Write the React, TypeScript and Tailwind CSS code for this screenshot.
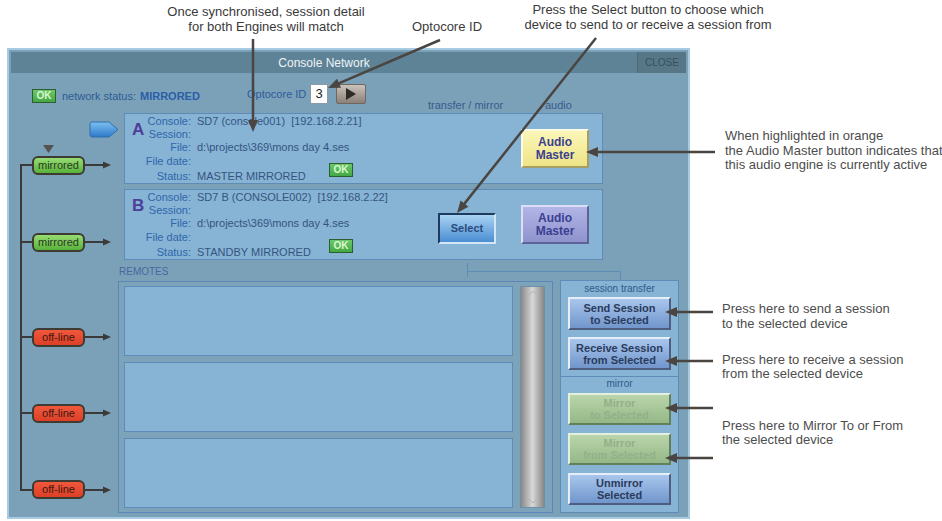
import React from "react";

function Arrow({ x1, y1, x2, y2, len = 12, hw = 5, w = 2.5, color = "#4a4541" }: { x1: number; y1: number; x2: number; y2: number; len?: number; hw?: number; w?: number; color?: string }) {
  const dx = x2 - x1;
  const dy = y2 - y1;
  const L = Math.hypot(dx, dy);
  const ux = dx / L;
  const uy = dy / L;
  const bx = x2 - ux * len;
  const by = y2 - uy * len;
  const px = -uy * hw;
  const py = ux * hw;
  return (
    <g>
      <line x1={x1} y1={y1} x2={bx + ux} y2={by + uy} stroke={color} strokeWidth={w} />
      <polygon points={`${x2},${y2} ${bx + px},${by + py} ${bx - px},${by - py}`} fill={color} />
    </g>
  );
}

function OkBadge() {
  return (
    <div className="w-[24px] h-[14px] border border-[#2e5e2e] bg-gradient-to-b from-[#6cc86a] to-[#43a843] flex items-center justify-center text-[10px] font-bold leading-none text-[#d8f7cf]">
      OK
    </div>
  );
}

function Engine({ letter, consoleText, status, children }: { letter: string; consoleText: string; status: string; children: React.ReactNode }) {
  const label = "text-right text-[#2f66aa]";
  const val = "text-[#34557f] whitespace-pre";
  return (
    <div className="ml-[6px] w-[479px] h-[71px] bg-[#87b3d4] border border-[#5f8cb6] flex">
      <div className="w-[20px] pl-[7px] pt-[7px] text-[17px] font-bold leading-none text-[#4b3f9a]">{letter}</div>
      <div className="pt-[1px] grid grid-cols-[46px_auto] gap-x-[6px] text-[11px] leading-[13px]">
        <div className={label}>Console:</div>
        <div className={val}>{consoleText}</div>
        <div className={label}>Session:</div>
        <div className={val}> </div>
        <div className={label}>File:</div>
        <div className={val}>{"d:\\projects\\369\\mons day 4.ses"}</div>
        <div className={label + " whitespace-nowrap"}>File date:</div>
        <div className={val}> </div>
        <div className={label + " mt-[2px]"}>Status:</div>
        <div className="mt-[2px] flex items-start">
          <div className={val + " w-[132px]"}>{status}</div>
          <div className="-mt-[7px] -mb-[1px]">
            <OkBadge />
          </div>
        </div>
      </div>
      <div className="flex-1" />
      <div className="flex items-center pr-[13px]">{children}</div>
    </div>
  );
}

function AudioMaster({ active }: { active: boolean }) {
  return active ? (
    <div className="w-[68px] h-[39px] flex items-center justify-center text-center text-[12px] leading-[13px] font-bold text-[#3b3f8f] bg-gradient-to-b from-[#fbf6b8] to-[#eee486] border-2 border-t-[#fffbe2] border-l-[#fffbe2] border-b-[#a69e62] border-r-[#a69e62]">
      Audio
      <br />
      Master
    </div>
  ) : (
    <div className="w-[68px] h-[39px] flex items-center justify-center text-center text-[12px] leading-[13px] font-bold text-[#3b3f8f] bg-gradient-to-b from-[#b2b5e6] to-[#8f93cd] border-2 border-t-[#dcddf6] border-l-[#dcddf6] border-b-[#5f6296] border-r-[#5f6296]">
      Audio
      <br />
      Master
    </div>
  );
}

function SessBtn({ l1, l2, disabled, h = 33 }: { l1: string; l2: string; disabled?: boolean; h?: number }) {
  const base = "w-[103px] flex items-center justify-center text-center text-[11px] leading-[12px] font-bold border-2";
  const cls = disabled
    ? "bg-gradient-to-b from-[#b9d5ab] to-[#95b887] text-[#94b08a] border-t-[#e3f0dc] border-l-[#e3f0dc] border-b-[#61805a] border-r-[#61805a]"
    : "bg-gradient-to-b from-[#a9c6ec] to-[#7196cc] text-[#2b3b5c] border-t-[#e6eff9] border-l-[#e6eff9] border-b-[#4d5e80] border-r-[#4d5e80]";
  return (
    <div className={base + " " + cls} style={{ height: h }}>
      {l1}
      <br />
      {l2}
    </div>
  );
}

function Pill({ top, kind }: { top: number; kind: "m" | "o" }) {
  const cls =
    kind === "m"
      ? "bg-gradient-to-b from-[#96dc72] to-[#58b23a] text-[#2a3a22]"
      : "bg-gradient-to-b from-[#f0583c] to-[#dd3f26] text-[#3d1a12]";
  return (
    <div
      className={"absolute left-[21px] w-[53px] h-[19px] rounded-[6px] border-2 border-[#3d3b33] flex items-center justify-center text-[11px] leading-none " + cls}
      style={{ top }}
    >
      {kind === "m" ? "mirrored" : "off-line"}
    </div>
  );
}

function LeftTree() {
  const ys = [52, 129, 224, 300, 377];
  return (
    <div className="relative w-[107px] h-full shrink-0">
      <svg className="absolute left-0 top-0" width={107} height={404}>
        <defs>
          <linearGradient id="bp" x1="0" y1="0" x2="0" y2="1">
            <stop offset="0" stopColor="#7cc0f2" />
            <stop offset="1" stopColor="#2c79c8" />
          </linearGradient>
        </defs>
        <line x1={10} y1={51} x2={10} y2={378} stroke="#3c3a38" strokeWidth={2} />
        {ys.map((y) => (
          <g key={y}>
            <line x1={9} y1={y} x2={22} y2={y} stroke="#3c3a38" strokeWidth={2} />
            <line x1={74} y1={y} x2={93} y2={y} stroke="#3c3a38" strokeWidth={2} />
            <polygon points={`${100},${y} ${92},${y - 3.5} ${92},${y + 3.5}`} fill="#3c3a38" />
          </g>
        ))}
        <polygon points="32,32 43,32 37.5,40" fill="#555250" />
        <path d="M81,9 H98 L107,16.5 L98,24 H81 Q79,24 79,22 V11 Q79,9 81,9 Z" fill="url(#bp)" stroke="#2f6fae" strokeWidth={1} />
      </svg>
      <Pill top={43} kind="m" />
      <Pill top={120} kind="m" />
      <Pill top={215} kind="o" />
      <Pill top={291} kind="o" />
      <Pill top={367} kind="o" />
    </div>
  );
}

function Window() {
  return (
    <div className="w-[683px] h-[471px] bg-[#7ba1b8] border-2 border-[#a6cbe2] p-[2px] flex flex-col">
      <div className="h-[21px] flex bg-[#5e8396] shrink-0">
        <div className="flex-1 flex items-center justify-center text-[12px] text-[#edf3f7]">
          Console Network
        </div>
        <div className="w-[49px] bg-[#577787] border-l border-[#4c6979] flex items-center justify-center text-[10px] text-[#34505e]">
          CLOSE
        </div>
      </div>
      {/* header */}
      <div className="h-[40px] flex items-start shrink-0 text-[11px]">
        <div className="w-[215px] ml-[21px] mt-[16px] flex items-center h-[14px]">
          <OkBadge />
          <span className="ml-[6px] text-[#2f5a95] leading-none">network status:</span>
          <span className="ml-[4px] font-bold text-[#2a5ea8] leading-none">MIRRORED</span>
        </div>
        <div className="mt-[11px] h-[20px] flex items-center">
          <span className="w-[63px] text-[#2f5a9a] leading-none">Optocore ID</span>
          <div className="w-[18px] h-[20px] bg-white border border-[#8a9aa6] flex items-center justify-center text-[13px] text-[#222]">3</div>
          <div className="ml-[8px] w-[30px] h-[20px] rounded-[2px] border border-[#6f6760] bg-gradient-to-b from-[#cbc2ba] to-[#8b817a] flex items-center justify-center">
            <svg width="10" height="12" viewBox="0 0 10 12">
              <polygon points="0,0 10,6 0,12" fill="#2e2a27" />
            </svg>
          </div>
        </div>
        <div className="mt-[26px] ml-[62px] w-[117px] leading-[13px] text-[#3a5a8c]">transfer / mirror</div>
        <div className="mt-[26px] leading-[13px] text-[#3a5a8c]">audio</div>
      </div>
      {/* body */}
      <div className="flex-1 flex">
        <LeftTree />
        <div className="flex flex-col w-[568px]">
          <Engine letter="A" consoleText="SD7 (console001)  [192.168.2.21]" status="MASTER MIRRORED">
            <AudioMaster active />
          </Engine>
          <div className="h-[5px]" />
          <Engine letter="B" consoleText="SD7 B (CONSOLE002)  [192.168.2.22]" status="STANDBY MIRRORED">
            <div className="flex items-end gap-[25px]">
              <div className="w-[58px] h-[31px] flex items-center justify-center text-[11px] font-bold text-[#2b4b7b] bg-gradient-to-b from-[#a8d2f2] to-[#4a8ed2] border-2 border-t-[#1f3a5f] border-l-[#1f3a5f] border-b-[#d2e6f6] border-r-[#d2e6f6]">
                Select
              </div>
              <AudioMaster active={false} />
            </div>
          </Engine>
          <div className="h-[20px] flex items-end shrink-0">
            <div className="w-[348px] pl-[1px] pb-[2px] text-[10px] leading-[12px] text-[#4a66a0]">REMOTES</div>
            <svg width="156" height="20" className="block">
              <line x1="1.5" y1="3" x2="1.5" y2="17" stroke="#5f8cb6" strokeWidth="1" />
              <line x1="1.5" y1="11.5" x2="154.5" y2="11.5" stroke="#5f8cb6" strokeWidth="1" />
              <line x1="154.5" y1="11.5" x2="154.5" y2="20" stroke="#5f8cb6" strokeWidth="1" />
            </svg>
          </div>
          <div className="flex items-start">
            <div className="mt-[1px] w-[435px] h-[232px] border border-[#5a86b8] bg-[#7da3ba] pt-[4px] pl-[5px] flex gap-[7px]">
              <div className="w-[389px] flex flex-col gap-[6px]">
                <div className="h-[70px] bg-[#87b3d4] border border-[#5f8cb6]" />
                <div className="h-[70px] bg-[#87b3d4] border border-[#5f8cb6]" />
                <div className="h-[70px] bg-[#87b3d4] border border-[#5f8cb6]" />
              </div>
              <div className="w-[25px] h-[222px] border border-[#6f8fa5] bg-gradient-to-r from-[#8a8a8a] via-[#d8d8d8] to-[#888888] flex flex-col justify-between items-center py-[3px]">
                <svg width="10" height="6" viewBox="0 0 10 6">
                  <polyline points="1,5 5,1 9,5" fill="none" stroke="#b3b3b3" strokeWidth="1" />
                </svg>
                <svg width="10" height="6" viewBox="0 0 10 6">
                  <polyline points="1,1 5,5 9,1" fill="none" stroke="#b3b3b3" strokeWidth="1" />
                </svg>
              </div>
            </div>
            <div className="ml-[7px] w-[119px] h-[233px] bg-[#87b3d4] border border-[#5f8cb6] flex flex-col">
              <div className="pl-[7px] pt-[1px] pb-[6px] flex flex-col border-b border-[#5f8cb6]">
                <div className="w-[103px] text-center text-[10px] leading-[13px] text-[#2f5a8a]">session transfer</div>
                <div className="mt-[2px] flex flex-col gap-[7px]">
                  <SessBtn l1="Send Session" l2="to Selected" />
                  <SessBtn l1="Receive Session" l2="from Selected" />
                </div>
              </div>
              <div className="pl-[7px] flex flex-col">
                <div className="w-[103px] text-center text-[10px] leading-[13px] text-[#2f5a8a]">mirror</div>
                <div className="mt-[3px] flex flex-col gap-[8px]">
                  <SessBtn l1="Mirror" l2="to Selected" disabled h={32} />
                  <SessBtn l1="Mirror" l2="from Selected" disabled h={32} />
                  <SessBtn l1="Unmirror" l2="Selected" h={32} />
                </div>
              </div>
            </div>
          </div>
        </div>
      </div>
    </div>
  );
}

export default function App() {
  return (
    <div className="relative w-[942px] h-[521px] bg-white overflow-hidden font-['Liberation_Sans',Arial,sans-serif]">
      <div className="pt-[48px] pl-[7px]">
        <Window />
      </div>

      {/* callouts */}
      <div className="absolute left-[146px] top-[4px] w-[240px] text-center text-[13px] leading-[15px] text-[#3a3a3a]">
        Once synchronised, session detail
        <br />
        for both Engines will match
      </div>
      <div className="absolute left-[397px] top-[19px] w-[100px] text-center text-[13px] leading-[15px] text-[#3a3a3a]">
        Optocore ID
      </div>
      <div className="absolute left-[488px] top-[2px] w-[320px] text-center text-[13px] leading-[15px] text-[#3a3a3a]">
        Press the Select button to choose which
        <br />
        device to send to or receive a session from
      </div>
      <div className="absolute left-[725px] top-[129px] text-[13px] leading-[14.5px] text-[#4d4d4d] whitespace-nowrap">
        When highlighted in orange
        <br />
        the Audio Master button indicates that
        <br />
        this audio engine is currently active
      </div>
      <div className="absolute left-[722px] top-[301px] text-[13px] leading-[15px] text-[#4d4d4d] whitespace-nowrap">
        Press here to send a session
        <br />
        to the selected device
      </div>
      <div className="absolute left-[722px] top-[353px] text-[13px] leading-[14px] text-[#4d4d4d] whitespace-nowrap">
        Press here to receive a session
        <br />
        from the selected device
      </div>
      <div className="absolute left-[722px] top-[419px] text-[13px] leading-[14px] text-[#4d4d4d] whitespace-nowrap">
        Press here to Mirror To or From
        <br />
        the selected device
      </div>

      <svg className="absolute left-0 top-0 pointer-events-none" width={942} height={521}>
        <Arrow x1={253} y1={39} x2={253} y2={132} />
        <Arrow x1={440} y1={40} x2={328} y2={88} />
        <Arrow x1={596} y1={38} x2={457} y2={213} />
        <Arrow x1={715} y1={152} x2={586} y2={152} />
        <Arrow x1={713} y1={312} x2={665} y2={312} />
        <Arrow x1={713} y1={361} x2={665} y2={361} />
        <Arrow x1={713} y1={408} x2={665} y2={408} />
        <Arrow x1={713} y1={458} x2={665} y2={458} />
      </svg>
    </div>
  );
}
